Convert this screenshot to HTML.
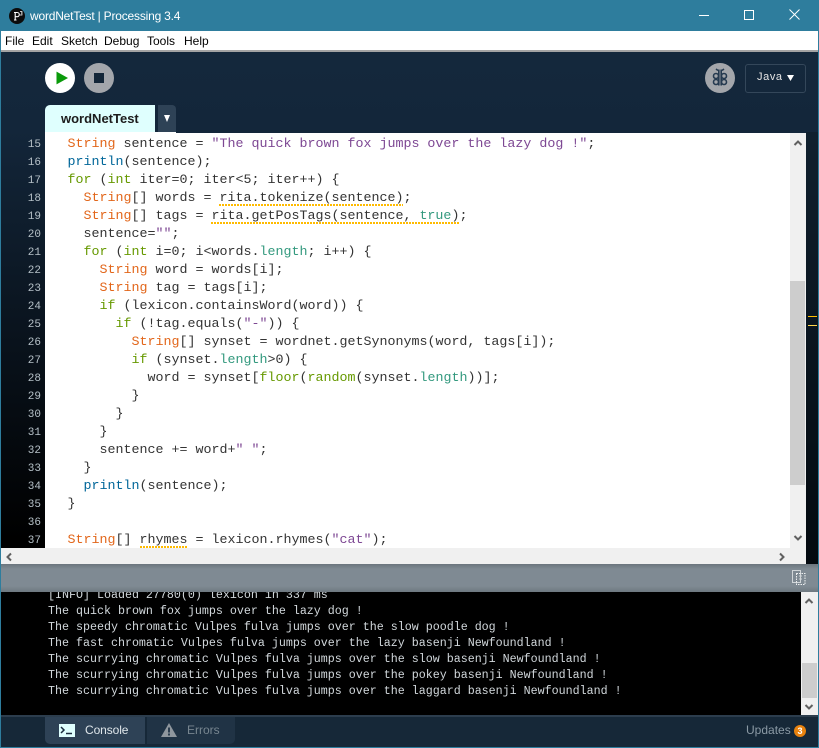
<!DOCTYPE html>
<html><head><meta charset="utf-8">
<style>
html,body{margin:0;padding:0;background:#000}
#w{position:relative;width:819px;height:748px;overflow:hidden;font-family:"Liberation Sans",sans-serif;background:linear-gradient(#14283c 52px,#13263a 130px,#000 540px)}
.a{position:absolute}
.menu span{position:absolute;top:0;font-size:12px;line-height:20px;color:#000}
#code{position:absolute;left:67.5px;margin:0;font:13.33px/18px "Liberation Mono",monospace;color:#333;white-space:pre;}
#code div{height:18px}
#nums{position:absolute;left:0;width:41px;top:136px;font:11px/18px "Liberation Mono",monospace;color:#b5c0c7;text-align:right}
.k{color:#e2661a}.f{color:#006699}.c{color:#669900}.l{color:#33997e}.s{color:#7d4793}
.u{display:inline-block;height:18px;background-image:repeating-linear-gradient(90deg,#fb0 0 2px,#fff 2px 3px);background-size:100% 2px;background-repeat:no-repeat;background-position:0 14px}
#con{position:absolute;left:48px;margin:0;font:11.67px/16px "Liberation Mono",monospace;color:#d2d8dc;white-space:pre}
</style></head><body>
<div id="w">
<div class="a" style="left:0;top:0;width:819px;height:31px;background:#2e7d9d"></div>
<div class="a" style="left:0;top:0;width:1px;height:748px;background:#2e7d9d;z-index:9"></div>
<div class="a" style="right:0;top:0;width:1px;height:748px;background:#2e7d9d;z-index:9"></div>
<div class="a" style="left:0;bottom:0;width:819px;height:1px;background:#2e7d9d;z-index:9"></div>
<svg class="a" style="left:9px;top:8px" width="16" height="16" viewBox="0 0 16 16"><circle cx="8" cy="8" r="8" fill="#0c0c0c"/><path d="M5 4.500h3.200a2 2 0 0 1 0 4.200H6.300M6.200 4.500V12M5 12h2.500" stroke="#fff" stroke-width="1.100" fill="none"/><path d="M11 3.500h2v1.500h-1M12 5h1v2h-2" stroke="#fff" stroke-width=".7" fill="none"/></svg>
<div class="a" style="left:30px;top:6px;font-size:12px;letter-spacing:-.2px;line-height:20px;color:#fff;white-space:pre">wordNetTest | Processing 3.4</div>
<div class="a" style="left:699px;top:15px;width:10px;height:1px;background:#fff"></div>
<div class="a" style="left:744px;top:10px;width:8px;height:8px;border:1px solid #fff"></div>
<svg class="a" style="left:789px;top:9px" width="11" height="11" viewBox="0 0 11 11"><path d="M.5.500l10 10M10.500.500l-10 10" stroke="#fff" stroke-width="1" fill="none"/></svg>

<div class="a menu" style="left:0;top:31px;width:819px;height:19px;background:#fff">
<span style="left:5px">File</span><span style="left:32px">Edit</span><span style="left:61px">Sketch</span><span style="left:104px">Debug</span><span style="left:147px">Tools</span><span style="left:184px">Help</span>
</div>
<div class="a" style="left:0;top:50px;width:819px;height:2px;background:#a4a4a4"></div>

<div class="a" style="left:45px;top:63px;width:30px;height:30px;border-radius:50%;background:#fff"></div>
<svg class="a" style="left:56px;top:71px" width="12" height="14"><path d="M1 1.500L11 7 1 12.500z" fill="#0a9a0a" stroke="#0a9a0a"/></svg>
<div class="a" style="left:84px;top:63px;width:30px;height:30px;border-radius:50%;background:#a3a6ab"></div>
<div class="a" style="left:94px;top:73px;width:10px;height:10px;background:#132638"></div>
<div class="a" style="left:705px;top:63px;width:30px;height:30px;border-radius:50%;background:#a3a6ab"></div>
<svg class="a" style="left:711px;top:68px" width="18" height="20" viewBox="0 0 18 20" fill="none" stroke="#253a50" stroke-width="1.600"><path d="M7.800 1.500v16M10.200 1.500v16"/><path d="M7 2.500L5 1M11 2.500L13 1"/><circle cx="5" cy="8" r="2.500"/><circle cx="13" cy="8" r="2.500"/><circle cx="5" cy="14" r="2.500"/><circle cx="13" cy="14" r="2.500"/></svg>
<div class="a" style="left:745px;top:64px;width:59px;height:27px;border:1px solid #34475a;border-radius:3px"></div>
<div class="a" style="left:757px;top:69px;font-size:11px;letter-spacing:.6px;line-height:16px;color:#e6e6e6">Java</div>
<svg class="a" style="left:787px;top:75px" width="7" height="6"><path d="M0 0h7L3.500 6z" fill="#fff"/></svg>

<div class="a" style="left:45px;top:105px;width:110px;height:27px;background:#dffffe;border-radius:5px 0 0 0"></div>
<div class="a" style="left:61px;top:109px;font-size:13px;font-weight:bold;line-height:19px;color:#1c1c1c">wordNetTest</div>
<div class="a" style="left:158px;top:105px;width:18px;height:27px;background:#2e4256;border-radius:0 4px 0 0"></div>
<svg class="a" style="left:164px;top:115px" width="7" height="7"><path d="M0 0h6L3 7z" fill="#fff"/></svg>

<div class="a" style="left:45px;top:132px;width:131px;height:2px;background:#fff"></div>
<div class="a" style="left:45px;top:133px;width:745px;height:415px;background:#fff"></div>
<div id="nums">15<br>16<br>17<br>18<br>19<br>20<br>21<br>22<br>23<br>24<br>25<br>26<br>27<br>28<br>29<br>30<br>31<br>32<br>33<br>34<br>35<br>36<br>37</div>
<div class="a" style="left:45px;top:134px;width:745px;height:414px;overflow:hidden">
<pre id="code" style="left:22.500px;top:2px"><div><span class="k">String</span> sentence = <span class="s">"The quick brown fox jumps over the lazy dog !"</span>;</div><div><span class="f">println</span>(sentence);</div><div><span class="c">for</span> (<span class="c">int</span> iter=0; iter&lt;5; iter++) {</div><div>  <span class="k">String</span>[] words = <span class="u">rita.tokenize(sentence)</span>;</div><div>  <span class="k">String</span>[] tags = <span class="u">rita.getPosTags(sentence, <span class="l">true</span>)</span>;</div><div>  sentence=<span class="s">""</span>;</div><div>  <span class="c">for</span> (<span class="c">int</span> i=0; i&lt;words.<span class="l">length</span>; i++) {</div><div>    <span class="k">String</span> word = words[i];</div><div>    <span class="k">String</span> tag = tags[i];</div><div>    <span class="c">if</span> (lexicon.containsWord(word)) {</div><div>      <span class="c">if</span> (!tag.equals(<span class="s">"-"</span>)) {</div><div>        <span class="k">String</span>[] synset = wordnet.getSynonyms(word, tags[i]);</div><div>        <span class="c">if</span> (synset.<span class="l">length</span>&gt;0) {</div><div>          word = synset[<span class="c">floor</span>(<span class="c">random</span>(synset.<span class="l">length</span>))];</div><div>        }</div><div>      }</div><div>    }</div><div>    sentence += word+<span class="s">" "</span>;</div><div>  }</div><div>  <span class="f">println</span>(sentence);</div><div>}</div><div> </div><div><span class="k">String</span>[] <span class="u">rhymes</span> = lexicon.rhymes(<span class="s">"cat"</span>);</div></pre>
</div>

<div class="a" style="left:790px;top:133px;width:16px;height:415px;background:#f0f0f0"></div>
<div class="a" style="left:790px;top:281px;width:15px;height:204px;background:#cdcdcd"></div>
<svg class="a" style="left:793px;top:139px" width="10" height="8"><path d="M1.500 6L5 2.500 8.500 6" stroke="#606060" stroke-width="2" fill="none"/></svg>
<svg class="a" style="left:793px;top:534px" width="10" height="8"><path d="M1.500 2L5 5.500 8.500 2" stroke="#606060" stroke-width="2" fill="none"/></svg>
<div class="a" style="left:806px;top:132px;width:12px;height:432px;background:linear-gradient(#10202e,#03090f)"></div>
<div class="a" style="left:808px;top:316px;width:9px;height:1px;background:#ffc000"></div>
<div class="a" style="left:808px;top:325px;width:9px;height:1px;background:#ffd84a"></div>
<div class="a" style="left:1px;top:548px;width:805px;height:16px;background:#f0f0f0"></div>
<svg class="a" style="left:5px;top:552px" width="8" height="10"><path d="M6 1.500L2.500 5 6 8.500" stroke="#606060" stroke-width="2" fill="none"/></svg>
<svg class="a" style="left:778px;top:552px" width="8" height="10"><path d="M2 1.500L5.500 5 2 8.500" stroke="#606060" stroke-width="2" fill="none"/></svg>

<div class="a" style="left:0;top:564px;width:819px;height:28px;background:linear-gradient(#6b757d,#7f8a93 5px,#7f8a93 22px,#6e7880)"></div>
<svg class="a" style="left:792px;top:570px" width="14" height="15" fill="none"><path d="M.5.500h8v12h-8z" stroke="#d0d5d8"/><path d="M4.500 3.500h8.500v11H4.500z" stroke="#eef0f1" stroke-dasharray="1.500 1"/><path d="M7 6h3M7 9h3" stroke="#d0d5d8"/></svg>

<div class="a" style="left:0;top:592px;width:801px;height:123px;background:#000;overflow:hidden">
<pre id="con" style="top:-5px">[INFO] Loaded 27780(0) lexicon in 337 ms
The quick brown fox jumps over the lazy dog !
The speedy chromatic Vulpes fulva jumps over the slow poodle dog !
The fast chromatic Vulpes fulva jumps over the lazy basenji Newfoundland !
The scurrying chromatic Vulpes fulva jumps over the slow basenji Newfoundland !
The scurrying chromatic Vulpes fulva jumps over the pokey basenji Newfoundland !
The scurrying chromatic Vulpes fulva jumps over the laggard basenji Newfoundland !</pre>
</div>
<div class="a" style="left:801px;top:592px;width:17px;height:123px;background:#f0f0f0"></div>
<div class="a" style="left:802px;top:663px;width:15px;height:35px;background:#cdcdcd"></div>
<svg class="a" style="left:804px;top:597px" width="10" height="8"><path d="M1.500 6L5 2.500 8.500 6" stroke="#606060" stroke-width="2" fill="none"/></svg>
<svg class="a" style="left:804px;top:703px" width="10" height="8"><path d="M1.500 2L5 5.500 8.500 2" stroke="#606060" stroke-width="2" fill="none"/></svg>

<div class="a" style="left:0;top:715px;width:819px;height:33px;background:#162838;border-top:2px solid #2c3d4d;box-sizing:border-box"></div>
<div class="a" style="left:45px;top:717px;width:100px;height:27px;background:#2e4256;border-radius:0 0 0 5px"></div>
<div class="a" style="left:147px;top:717px;width:88px;height:27px;background:#203345;border-radius:0 0 5px 0"></div>
<svg class="a" style="left:59px;top:724px" width="16" height="13"><rect width="16" height="13" fill="#dffffe"/><path d="M2 3l3 3-3 3" stroke="#1a2c3e" stroke-width="1.500" fill="none"/><path d="M7 9.500h6" stroke="#1a2c3e" stroke-width="1.500"/></svg>
<div class="a" style="left:85px;top:722px;font-size:12px;letter-spacing:-.1px;line-height:16px;color:#dfe6ea">Console</div>
<svg class="a" style="left:161px;top:723px" width="16" height="14"><path d="M8 0l8 14H0z" fill="#8f979e"/><path d="M8 4.500v5M8 10.500v2" stroke="#203345" stroke-width="1.800"/></svg>
<div class="a" style="left:187px;top:722px;font-size:12px;line-height:16px;color:#788690">Errors</div>
<div class="a" style="left:746px;top:722px;font-size:12px;line-height:16px;color:#8b9aa5">Updates</div>
<div class="a" style="left:794px;top:725px;width:12px;height:12px;border-radius:50%;background:#e8820e;color:#fff;font-size:9px;font-weight:bold;line-height:12px;text-align:center">3</div>
</div>
</body></html>
